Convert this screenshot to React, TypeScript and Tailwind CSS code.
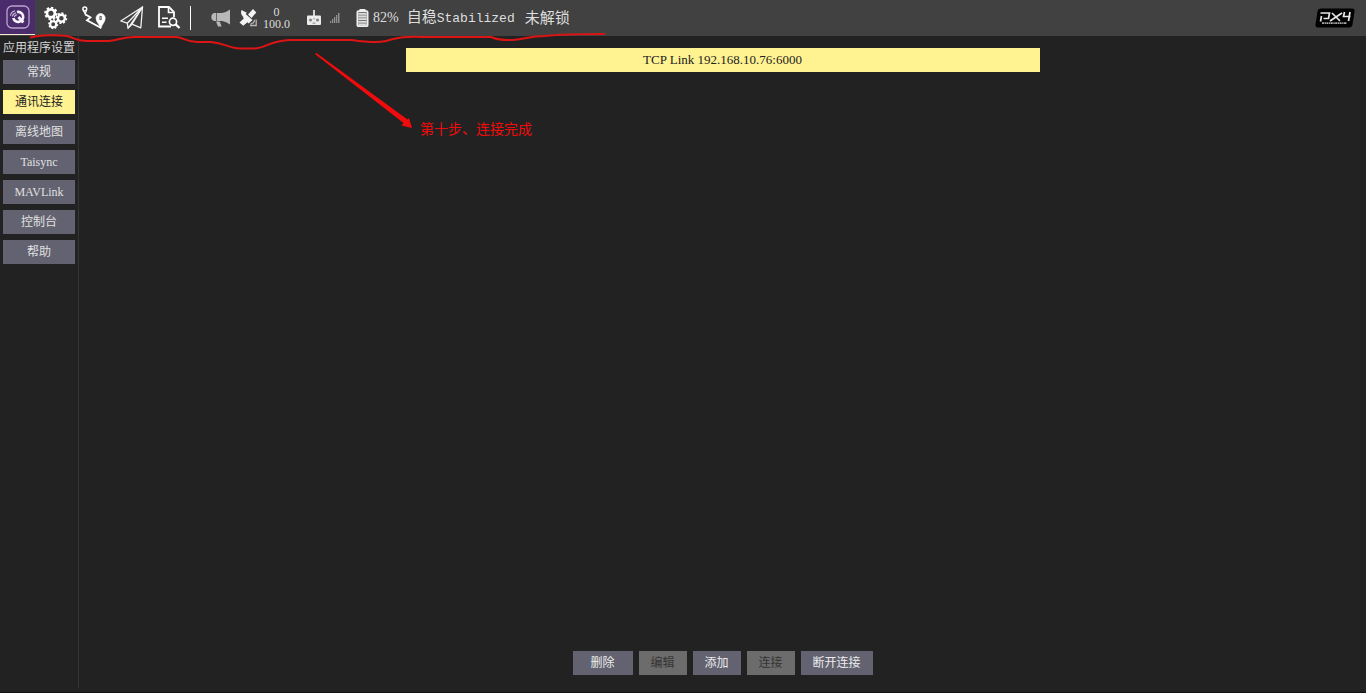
import React from "react";

const serif = "font-['Liberation_Serif','Noto_Sans_CJK_SC',serif]";
const mono = "font-['Liberation_Mono','Noto_Sans_CJK_SC',monospace]";

const Gear = ({ x, y, r }: { x: number; y: number; r: number }) => (
  <g fill="none" stroke="#fff">
    <circle cx={x} cy={y} r={r * 0.6} strokeWidth={r * 0.42} />
    <circle cx={x} cy={y} r={r * 0.86} strokeWidth={r * 0.3} pathLength={16} strokeDasharray="1.1 0.9" />
  </g>
);

const QIcon = () => (
  <svg width="24" height="24" viewBox="0 0 24 24" fill="none" aria-hidden="true">
    <rect x="1" y="1" width="22" height="22" rx="5" stroke="#b9a5cf" strokeWidth="1.3" />
    <path d="M11 7A5 5 0 1 1 7.300 13" stroke="#f6f1fa" strokeWidth="2.600" />
    <path d="M12.500 12l4.800 5.500" stroke="#f6f1fa" strokeWidth="2.800" />
    <path d="M4.500 10.800q.4-4 4.500-5.100M6.400 11.400q.4-2.800 3.600-3.700M8.400 12q.2-1.800 2.400-2.400" stroke="#cdbcdf" strokeWidth="1.100" />
  </svg>
);

const GearsIcon = () => (
  <svg width="24" height="24" viewBox="0 0 24 24" aria-hidden="true">
    <Gear x={6.9} y={7.3} r={6.6} />
    <Gear x={17.4} y={12.2} r={5.8} />
    <Gear x={9.2} y={18.2} r={5} />
  </svg>
);

const RouteIcon = () => (
  <svg width="24" height="24" viewBox="0 0 24 24" fill="none" stroke="#fff" aria-hidden="true">
    <circle cx="2.800" cy="3" r="1.900" strokeWidth="1.500" />
    <path d="M1.500 4.500l1.700 3.700 1.200-3.700" strokeWidth="1.200" />
    <path d="M3.200 8.400L8.500 11.300 5 14.300 19.200 22" strokeWidth="1.800" />
    <path d="M18.800 22.500c-1-4-4.800-6.500-4.800-10.300a4.600 4.600 0 1 1 9.200 0c0 3.800-3.400 6.300-4.400 10.300z" fill="#fff" strokeWidth=".6" />
    <ellipse cx="18.600" cy="12" rx="1.500" ry="2.200" fill="#666" stroke="none" />
    <path d="M17.600 12h2" stroke="#fff" strokeWidth=".8" />
  </svg>
);

const PlaneIcon = () => (
  <svg width="24" height="24" viewBox="0 0 24 24" fill="none" stroke="#f2f2f2" strokeWidth="1.300" strokeLinejoin="round" aria-hidden="true">
    <path d="M22.500 1L.8 15l6.500 2.200L22.500 1z" />
    <path d="M22.500 1L12 18.200l8.800 3.600L22.500 1z" />
    <path d="M7.300 17.200L8 22.300 22.500 1M8 22.300l4-4.100" />
  </svg>
);

const AnalyzeIcon = () => (
  <svg width="24" height="24" viewBox="0 0 24 24" fill="none" stroke="#fff" strokeWidth="1.800" aria-hidden="true">
    <path d="M16 11V6L11 1H1v19.500h12" />
    <path d="M10.500 1v5.500H16M4 12.300h6M4 16.300h4.500" strokeWidth="1.600" />
    <circle cx="15" cy="15.800" r="3.600" strokeWidth="1.700" />
    <path d="M17.700 18.400l3.800 3.600" strokeWidth="2.400" />
  </svg>
);

const MegaphoneIcon = () => (
  <svg width="20" height="20" viewBox="0 0 20 20" fill="#b8b8b8" aria-hidden="true">
    <path d="M5.300 5v8H3.200Q.3 12.200.3 9T3.200 5z" />
    <path d="M6 5h5q4.500-.8 8-3.500v15q-3.500-2.700-8-3.500H6zM5 13.500h3.800l1.800 5H7z" />
  </svg>
);

const SatelliteIcon = () => (
  <svg width="20" height="20" viewBox="0 0 20 20" fill="#f4f4f4" aria-hidden="true">
    <path d="M6 5.500l7.500 6.500-3.800 3.500L3.700 9z" />
    <path d="M9 6.500L14 1l3.300 3.500L12.500 10zM5.500 9.800l3.800 3.800-5 4.100L.5 14.600z" />
    <path d="M2.500 2l5.300 2.800-3.600 4Q1 6 2.500 2z" />
    <path d="M11.500 16q3.700-.3 4-4.200M11 17.500h6.200v-6" fill="none" stroke="#b4b4b4" strokeWidth="1.300" />
  </svg>
);

const RemoteIcon = () => (
  <svg width="16" height="18" viewBox="0 0 16 18" aria-hidden="true">
    <path d="M8 1v7" stroke="#d5d5d5" strokeWidth="2" />
    <rect x="1" y="6.500" width="14" height="9.500" rx="1" fill="#ececec" />
    <g fill="#858585">
      <circle cx="4.500" cy="11" r="1.600" />
      <circle cx="11.500" cy="11" r="1.600" />
      <rect x="7.500" y="9" width="1" height="1.500" />
      <rect x="6.500" y="13.600" width="3" height="1" />
    </g>
  </svg>
);

const SignalIcon = () => (
  <svg width="10" height="10" viewBox="0 0 10 10" fill="#909090" aria-hidden="true">
    <path d="M0 8h1.300v2H0zM2 6h1.300v4H2zM4 4h1.300v6H4zM6 2h1.300v8H6zM8 0h1.500v10H8z" />
  </svg>
);

const BatteryIcon = () => (
  <svg width="13" height="20" viewBox="0 0 13 20" fill="none" aria-hidden="true">
    <rect x="3.500" y="1" width="6" height="2" fill="#efefef" />
    <rect x="1.400" y="3.200" width="10.200" height="15" rx="1" fill="#777" stroke="#efefef" strokeWidth="1.800" />
    <path d="M2.500 5.800h8M2.500 8.500h8M2.500 11.200h8M2.500 13.900h8M2.500 16.500h8" stroke="#dcdcdc" strokeWidth="1.800" />
  </svg>
);

const Px4Logo = () => (
  <svg width="40" height="20" viewBox="0 0 40 20" fill="none" aria-label="PX4" role="img">
    <path d="M6 .500h31q3 0 2.500 3l-2 13q-.5 3-3.500 3H3q-3 0-2.500-3l2-13Q3 .500 6 .500z" fill="#000" />
    <g stroke="#e6e6e6" strokeWidth="1.700">
      <path d="M5.500 5h9l-1 5.500H8.500M6.500 8l-1 5.500" />
      <path d="M17 5l8 8M27 5l-12 8" />
      <path d="M29.500 4l-1 4.500h7M35 4l-1.500 9" />
    </g>
    <path d="M7 15.200h25" stroke="#a8a8a8" strokeWidth="1.700" strokeDasharray="2 .6 1.300 .5" />
  </svg>
);

const tools = [
  { label: "规划", icon: <GearsIcon /> },
  { label: "航线", icon: <RouteIcon /> },
  { label: "飞行", icon: <PlaneIcon /> },
  { label: "分析", icon: <AnalyzeIcon /> },
];

const pages = ["常规", "通讯连接", "离线地图", "Taisync", "MAVLink", "控制台", "帮助"];

const actions = [
  { label: "删除", width: "w-[60px]", disabled: false },
  { label: "编辑", width: "w-12", disabled: true },
  { label: "添加", width: "w-12", disabled: false },
  { label: "连接", width: "w-12", disabled: true },
  { label: "断开连接", width: "w-[72px]", disabled: false },
];

function Toolbar() {
  return (
    <header className="flex h-9 shrink-0 items-center bg-[#414141] text-[#dedede]">
      <button aria-label="应用程序设置" className="flex h-[35px] w-[35px] shrink-0 items-center justify-center self-start border-b border-[#f5e6c8] bg-[#4a2b6b]">
        <QIcon />
      </button>
      <nav className="ml-[9px] flex items-center gap-[14px]">
        {tools.map((tool) => (
          <button key={tool.label} aria-label={tool.label}>{tool.icon}</button>
        ))}
      </nav>
      <div className="ml-2 h-6 w-px bg-white" />
      <div className="ml-5 flex items-center">
        <MegaphoneIcon />
        <div className="ml-2 flex items-center">
          <SatelliteIcon />
          <div className={`${serif} ml-1 flex flex-col items-center text-[12px] leading-3`}>
            <span>0</span>
            <span>100.0</span>
          </div>
        </div>
        <div className="ml-4 flex items-center gap-2">
          <RemoteIcon />
          <SignalIcon />
        </div>
        <div className="ml-4 flex items-center gap-1">
          <BatteryIcon />
          <span className={`${serif} text-[14px] leading-5`}>82%</span>
        </div>
        <button className="ml-2 flex items-baseline pb-[2px] text-[15px] leading-5">
          <span>自稳</span>
          <span className={`${mono} text-[13px]`}>Stabilized</span>
        </button>
        <button className="ml-[10px] pb-[2px] text-[15px] leading-5">未解锁</button>
      </div>
      <div className="mr-[11px] ml-auto">
        <Px4Logo />
      </div>
    </header>
  );
}

function Annotation() {
  return (
    <div className="pointer-events-none absolute top-0 left-0">
      <svg width="620" height="140" viewBox="0 0 620 140" fill="none" aria-hidden="true">
        <path
          d="M30 37.500C40 35 58 34.500 67 36C75 38 76 41 86 41H109C120 40 122 37 135 37H176C183 37 186 42 197 42H211C225 43 229 48.500 240 48.500H254C266 48 270 40.500 290 40H352C362 41.500 378 43 386 41C399 37.500 405 36 423 37H491C498 40 503 40.500 513 40C526 39 530 36 545 36C563 34 580 34 605 34"
          stroke="#dc1414"
          strokeWidth="2"
        />
        <path d="M315.500 53.300L316.500 53 407.500 119.500 409 118 412 128 401.500 125.500 403.500 123 315.500 54.500z" fill="#f00c0c" />
      </svg>
      <p className="absolute top-[118px] left-[420px] text-[14px] leading-5 whitespace-nowrap text-[#f00c0c]">第十步、连接完成</p>
    </div>
  );
}

export default function App() {
  return (
    <div className="relative flex h-screen flex-col border-b border-[#151012] bg-[#222222] font-['Noto_Sans_CJK_SC',sans-serif] text-[12px] leading-4 font-normal">
      <Toolbar />
      <div className="flex min-h-0 flex-1">
        <aside className="mb-1 flex w-[79px] shrink-0 flex-col border-r border-[#353535] pt-[3px] pr-[3px] pl-[3px]">
          <h1 className="text-center leading-4 whitespace-nowrap text-[#d4d4d4]">应用程序设置</h1>
          <nav className="mt-[5px] flex flex-col gap-[6px]">
            {pages.map((page) => (
              <button
                key={page}
                className={`h-6 ${/^[A-Z]/.test(page) ? serif : "pb-[2px]"} ${
                  page === "通讯连接" ? "bg-[#fff291] text-[#222222]" : "bg-[#626270] text-[#e0e0e0]"
                }`}
              >
                {page}
              </button>
            ))}
          </nav>
        </aside>
        <main className="flex flex-1 flex-col items-center pt-3 pb-[17px]">
          <button className={`${serif} h-6 w-1/2 max-w-[634px] bg-[#fff291] text-[13px] text-[#222222]`}>
            TCP Link 192.168.10.76:6000
          </button>
          <div className="mt-auto flex gap-[6px]">
            {actions.map((action) => (
              <button
                key={action.label}
                disabled={action.disabled}
                className={`h-6 pb-[2px] ${action.width} ${
                  action.disabled ? "bg-[#6c6c6c] text-[#353535]" : "bg-[#626270] text-[#ececec]"
                }`}
              >
                {action.label}
              </button>
            ))}
          </div>
        </main>
      </div>
      <Annotation />
    </div>
  );
}
